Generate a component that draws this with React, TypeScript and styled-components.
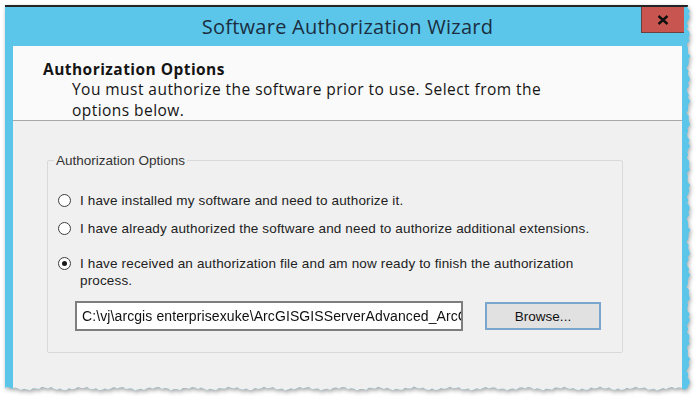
import styled, { createGlobalStyle } from "styled-components";

const GlobalStyle = createGlobalStyle`
  html, body {
    margin: 0;
    padding: 0;
    background: #ffffff;
  }
  body {
    width: 696px;
    height: 400px;
    overflow: hidden;
  }
`;

const WIN_W = 686;
const WIN_H = 386;

// ragged "torn paper" outline for the right and bottom edges
function tornOutline(w: number, h: number) {
  const pts: string[] = ["0px 0px", `${w - 3}px 0px`];
  for (let y = 3; y < h - 3; y += 3) {
    const j = (Math.sin(y * 0.83) + Math.sin(y * 0.29 + 2)) * 1.1 + 2.6;
    pts.push(`${(w - j).toFixed(1)}px ${y}px`);
  }
  for (let x = w - 4; x > 0; x -= 3) {
    const j = (Math.sin(x * 0.71) + Math.sin(x * 0.17 + 1)) * 1.0 + 2.4;
    pts.push(`${x}px ${(h - j).toFixed(1)}px`);
  }
  pts.push(`0px ${h - 2}px`);
  return `polygon(${pts.join(", ")})`;
}

const Page = styled.div`
  padding: 5px 0 0 5px;
`;

const Shadow = styled.div`
  width: ${WIN_W}px;
  height: ${WIN_H}px;
  filter: drop-shadow(1px 2px 2px rgba(0, 0, 0, 0.35));
`;

const Window = styled.div`
  box-sizing: border-box;
  width: 100%;
  height: 100%;
  display: flex;
  flex-direction: column;
  background: #5cc6ea;
  border-top: 2px solid #242424;
  padding: 0 9px 0 8px;
  clip-path: ${tornOutline(WIN_W, WIN_H)};
`;

const TitleBar = styled.div`
  height: 39px;
  display: grid;
  grid-template-columns: 1fr auto 1fr;
  align-items: start;
`;

const Title = styled.div`
  grid-column: 2;
  align-self: center;
  font-family: "Open Sans", "Noto Sans", sans-serif;
  font-size: 20px;
  letter-spacing: 0.25px;
  color: #1a2e40;
  margin-top: -1px;
`;

const CloseButton = styled.button`
  grid-column: 3;
  justify-self: end;
  margin-right: -2px;
  width: 43px;
  height: 26px;
  padding: 0;
  border: none;
  border-left: 1px solid #6b4040;
  border-bottom: 1px solid #6b4040;
  background: #c85550;
  display: flex;
  align-items: center;
  justify-content: center;
`;

const Content = styled.div`
  flex: 1;
  display: flex;
  flex-direction: column;
  background: #f0f0f0;
`;

const Header = styled.div`
  box-sizing: border-box;
  height: 75px;
  padding: 13px 0 0 30px;
  background: #fafafa;
  border-bottom: 1px solid #a7a7a7;
  font-family: "Open Sans", "Noto Sans", sans-serif;
  font-size: 15.5px;
  letter-spacing: 0.45px;
  color: #151515;
`;

const Heading = styled.div`
  font-weight: 700;
  line-height: 20px;
`;

const Description = styled.div`
  line-height: 21px;
  padding-left: 29px;
`;

const Body = styled.div`
  flex: 1;
  padding-top: 32px;
`;

const GroupBox = styled.fieldset`
  margin: 0 59px 0 34px;
  padding: 0 0 21px 10px;
  border: 1px solid #d9d9d9;
  border-radius: 2px;
  font-family: "Liberation Sans", Arial, sans-serif;
  font-size: 13.5px;
  letter-spacing: 0.15px;
  color: #222;
`;

const Legend = styled.legend`
  margin-left: -4px;
  padding: 0 2px;
  line-height: 15px;
  letter-spacing: 0;
  color: #333;
`;

const OptionList = styled.div`
  display: flex;
  flex-direction: column;
  padding-top: 24px;
`;

const Option = styled.label<{ $gap: number }>`
  display: flex;
  align-items: flex-start;
  gap: 9px;
  margin-top: ${(p) => p.$gap}px;
  line-height: 17px;
  max-width: 552px;
`;

const Radio = styled.span<{ $checked?: boolean }>`
  flex: none;
  box-sizing: border-box;
  width: 13px;
  height: 13px;
  margin-top: 2px;
  border-radius: 50%;
  border: 1px solid #3e3e3e;
  background: #fff;
  display: flex;
  align-items: center;
  justify-content: center;
  &::after {
    content: "";
    width: 5px;
    height: 5px;
    border-radius: 50%;
    background: ${(p) => (p.$checked ? "#1a1a1a" : "transparent")};
  }
`;

const FileRow = styled.div`
  display: flex;
  align-items: center;
  margin: 12px 0 0 17px;
`;

const PathInput = styled.div`
  box-sizing: border-box;
  width: 388px;
  height: 30px;
  padding: 0 5px;
  border: 2px solid #7e7e7e;
  background: #fff;
  font-size: 14px;
  line-height: 26px;
  letter-spacing: 0.1px;
  white-space: nowrap;
  overflow: hidden;
  color: #111;
`;

const BrowseButton = styled.button`
  box-sizing: border-box;
  margin-left: 22px;
  width: 116px;
  height: 28px;
  border: 2px solid #7aa5cf;
  background: #e1e1e1;
  font-family: "Liberation Sans", Arial, sans-serif;
  font-size: 13.5px;
  color: #111;
`;

const options = [
  { text: "I have installed my software and need to authorize it.", gap: 0 },
  {
    text: "I have already authorized the software and need to authorize additional extensions.",
    gap: 11,
  },
  {
    text: "I have received an authorization file and am now ready to finish the authorization process.",
    gap: 18,
    checked: true,
  },
];

export default function App() {
  return (
    <Page>
      <GlobalStyle />
      <Shadow>
        <Window>
          <TitleBar>
            <Title>Software Authorization Wizard</Title>
            <CloseButton aria-label="Close">
              <svg width="12" height="10" viewBox="0 0 12 10">
                <path d="M1.5 1 L10.5 9 M10.5 1 L1.5 9" stroke="#111" strokeWidth="2.4" />
              </svg>
            </CloseButton>
          </TitleBar>
          <Content>
            <Header>
              <Heading>Authorization Options</Heading>
              <Description>
                You must authorize the software prior to use. Select from the
                <br />
                options below.
              </Description>
            </Header>
            <Body>
              <GroupBox>
                <Legend>Authorization Options</Legend>
                <OptionList>
                  {options.map((o) => (
                    <Option key={o.text} $gap={o.gap}>
                      <Radio $checked={o.checked} />
                      <span>{o.text}</span>
                    </Option>
                  ))}
                </OptionList>
                <FileRow>
                  <PathInput>C:\vj\arcgis enterprisexuke\ArcGISGISServerAdvanced_ArcGIS</PathInput>
                  <BrowseButton>Browse...</BrowseButton>
                </FileRow>
              </GroupBox>
            </Body>
          </Content>
        </Window>
      </Shadow>
    </Page>
  );
}
